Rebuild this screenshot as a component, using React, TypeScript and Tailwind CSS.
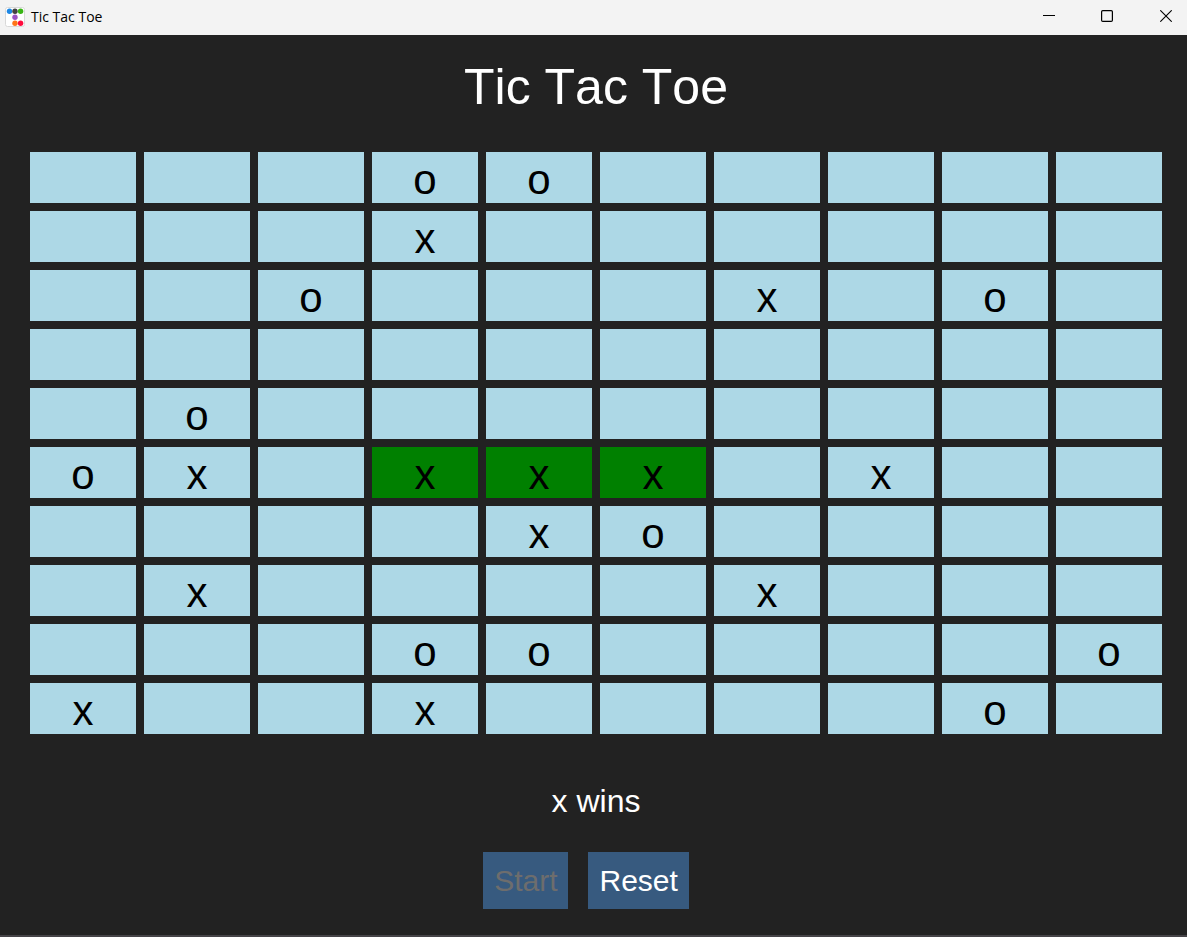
const board: string[] = [
  "...oo.....",
  "...x......",
  "..o...x.o.",
  "..........",
  ".o........",
  "ox.xxx.x..",
  "....xo....",
  ".x....x...",
  "...oo....o",
  "x..x....o.",
];

const winningCells = ["5-3", "5-4", "5-5"];

function AppIcon() {
  return (
    <svg width="20" height="20" viewBox="0 0 20 20" aria-hidden="true">
      <rect x="0.5" y="0.5" width="19" height="19" rx="2" fill="#fff" stroke="#d8d8d8" />
      <circle cx="4.5" cy="4.2" r="2.7" fill="#1e88e5" />
      <circle cx="10" cy="4.2" r="2.7" fill="#424242" />
      <circle cx="15.6" cy="4.2" r="2.7" fill="#39b515" />
      <circle cx="10" cy="10.2" r="2.7" fill="#9b51c4" />
      <circle cx="10" cy="16.2" r="2.7" fill="#ff7418" />
      <circle cx="15.6" cy="16.2" r="2.7" fill="#ff0a3c" />
    </svg>
  );
}

function TitleBar() {
  return (
    <header className="flex h-[35px] items-start justify-between bg-[#f3f3f3] text-black">
      <div className="flex items-center gap-[6px] pl-[5px] pt-[6px]">
        <AppIcon />
        <span className="font-['Open_Sans','Noto_Sans',sans-serif] text-[14px] leading-[22px]">Tic Tac Toe</span>
      </div>
      <div className="flex">
        <button type="button" aria-label="Minimize" className="flex h-8 w-[58px] items-center justify-center">
          <svg width="12" height="12" viewBox="0 0 12 12" fill="none" stroke="#000">
            <path d="M0 5.5H12" />
          </svg>
        </button>
        <button type="button" aria-label="Maximize" className="flex h-8 w-[58px] items-center justify-center">
          <svg width="12" height="12" viewBox="0 0 12 12" fill="none" stroke="#000" strokeWidth="1.2">
            <rect x="0.6" y="0.6" width="10.8" height="10.8" rx="1.2" />
          </svg>
        </button>
        <button type="button" aria-label="Close" className="flex h-8 w-[51px] items-center justify-center pl-[9px]">
          <svg width="12" height="12" viewBox="0 0 12 12" fill="none" stroke="#000" strokeWidth="1.1">
            <path d="M0.3 0.3L11.7 11.7M11.7 0.3L0.3 11.7" />
          </svg>
        </button>
      </div>
    </header>
  );
}

export default function App() {
  return (
    <div className="flex min-h-screen flex-col border-b-2 border-[#454347] bg-[#222222] font-['Liberation_Sans',Arial,sans-serif] text-white [font-kerning:none]">
      <TitleBar />
      <main className="flex flex-1 flex-col pl-[30px] pr-[25px] pt-[22px]">
        <h1 className="text-center text-[50px] leading-[60px]">Tic Tac Toe</h1>
        <div className="mt-[35px] grid grid-cols-10 gap-2">
          {board.map((row, r) =>
            row.split("").map((mark, c) => {
              const key = `${r}-${c}`;
              const color = winningCells.includes(key) ? "bg-[#008000]" : "bg-[#add8e6]";
              return (
                <button
                  key={key}
                  type="button"
                  aria-label={`Row ${r + 1}, column ${c + 1}`}
                  className={`flex h-[51px] items-center justify-center pt-1 text-[42px] leading-[47px] text-black ${color}`}
                >
                  {mark === "." ? "" : mark}
                </button>
              );
            }),
          )}
        </div>
        <p className="mt-[47px] text-center text-[32px] leading-10" role="status">
          x wins
        </p>
        <div className="mt-[31px] flex justify-center gap-5 pb-[26px] pr-[20px]">
          <button type="button" disabled className="h-[57px] bg-[#375a7f] px-[11px] text-[30px] leading-[57px] text-[#6d6d6d]">
            Start
          </button>
          <button type="button" className="h-[57px] bg-[#375a7f] px-[11px] text-[30px] leading-[57px]">
            Reset
          </button>
        </div>
      </main>
    </div>
  );
}
